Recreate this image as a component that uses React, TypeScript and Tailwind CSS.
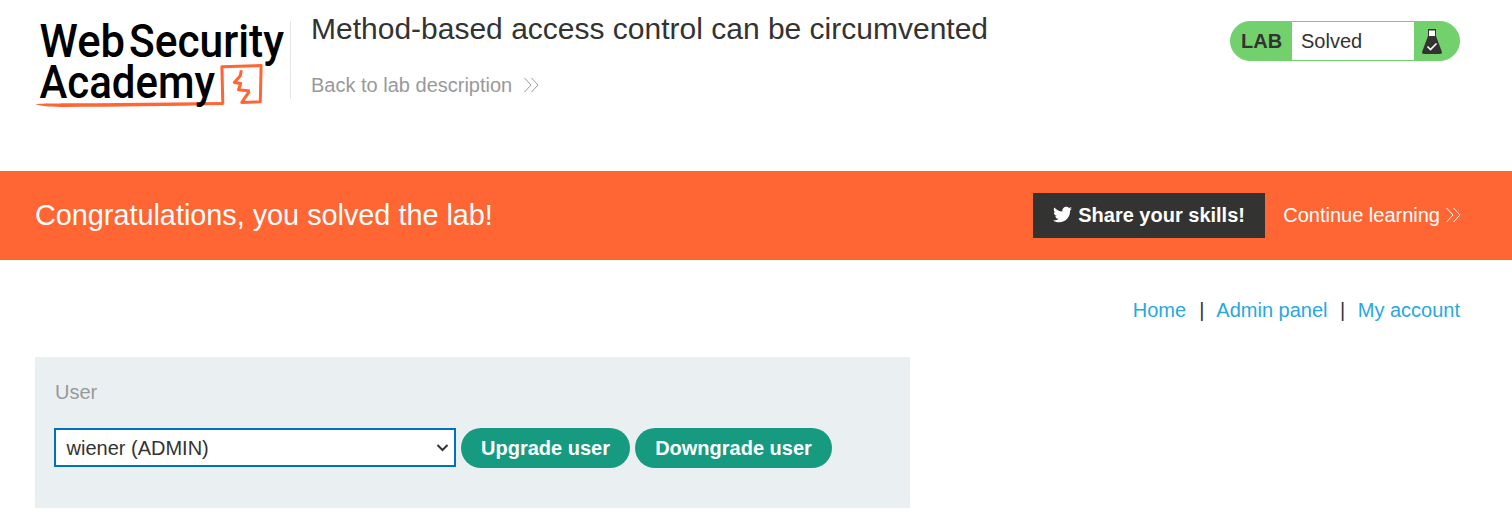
import { FaTwitter } from "react-icons/fa";

function Chevrons({ className }: { className: string }) {
  return (
    <svg width="16" height="16" viewBox="0 0 16 16" fill="none" stroke="currentColor" strokeWidth="1" className={className}>
      <path d="M1.500 1L8 8l-6.500 7M8.500 1L15 8l-6.500 7" />
    </svg>
  );
}

function Logo() {
  return (
    <svg width="255" height="96" viewBox="35 14 255 96" className="block shrink-0 overflow-visible">
      <path d="M35.500 104.300c12-1.200 30-.8 60-1l128-1.200v3c-50 .8-110 1.900-158 1.900-12 0-24-.5-30-2.700z" fill="#ff6633" />
      <g fill="none" stroke="#ff6633" strokeWidth="3" strokeLinejoin="round">
        <path d="M222.800 103.500l-.9-36.800 39.200-1.200-.8 36.300-18.500.6 7.500-11" />
        <path d="M241.300 70.200l-1 5.500-6 6.800 6.400 1-2.200 6.300 11.500 1.200" />
      </g>
      <g fill="#000" fontFamily="Roboto, sans-serif" fontWeight="500" fontSize="47">
        <text x="39.500" y="56.700" textLength="85.500" lengthAdjust="spacingAndGlyphs">Web</text>
        <text x="129" y="56.700" textLength="155" lengthAdjust="spacingAndGlyphs">Security</text>
        <text x="39.500" y="98" textLength="175.500" lengthAdjust="spacingAndGlyphs">Academy</text>
      </g>
    </svg>
  );
}

function Flask() {
  return (
    <svg width="22" height="28" viewBox="0 0 22 28">
      <path d="M7 1.500h8V8l5.800 15.500q.7 2.500-2 2.500H3.200q-2.700 0-2-2.500L7 8z" fill="#333332" />
      <path d="M8 2.500h6V8H8z" fill="#fff" />
      <path d="M7 1.500h8" stroke="#333332" />
      <path d="M6.500 18.500l3 3 6-6" fill="none" stroke="#fff" strokeWidth="1.600" />
    </svg>
  );
}

export default function App() {
  return (
    <div className="h-[513px] w-full overflow-hidden bg-white font-['Liberation_Sans',Arial,sans-serif] text-xl text-[#333332]">
      <header className="flex h-[171px] items-start pr-[52px] pl-[35px]">
        <div className="pt-3.5"><Logo /></div>
        <div className="mt-[21px] h-[78px] w-px bg-[#e6e6e6]" />
        <div className="ml-5 flex-1 pt-2.5">
          <h1 className="text-[30px] leading-[38px] whitespace-nowrap">Method-based access control can be circumvented</h1>
          <a className="mt-[23px] flex items-center leading-7 text-[#999]">
            Back to lab description
            <Chevrons className="ml-[11px]" />
          </a>
        </div>
        <div className="mt-[21px] flex h-10 w-[230px] overflow-hidden rounded-full border border-[#72d16d] bg-[#72d16d]">
          <strong className="flex w-[61px] items-center pl-2.5">LAB</strong>
          <span className="flex w-[122px] items-center bg-white pl-[9px]">Solved</span>
          <span className="pt-[6px] pl-[7px]"><Flask /></span>
        </div>
      </header>
      <section className="flex h-[89px] items-center bg-[#ff6633] pr-[51px] pl-[35px] text-white">
        <h2 className="flex-1 pb-0.5 text-[28.8px] leading-9">Congratulations, you solved the lab!</h2>
        <button className="flex h-[45px] w-[232px] items-center bg-[#333332] pb-0.5 pl-5 font-bold whitespace-nowrap">
          <FaTwitter size={19} className="mr-1.5 shrink-0" />
          Share your skills!
        </button>
        <a className="ml-[18px] flex items-center pb-0.5 whitespace-nowrap">
          Continue learning
          <Chevrons className="ml-[5px]" />
        </a>
      </section>
      <nav className="flex h-[97px] justify-end pt-9 pr-[52px] leading-7 text-[#29a7df]">
        <a>Home</a>
        <span className="mr-3 ml-[13px] text-[#333332]">|</span>
        <a>Admin panel</a>
        <span className="mr-[12.5px] ml-[12.5px] text-[#333332]">|</span>
        <a>My account</a>
      </nav>
      <form className="ml-[35px] h-[151px] w-[875px] bg-[#eaf0f2] pt-[21px] pl-[19px]">
        <label className="block pl-px leading-7 text-[#999]">User</label>
        <div className="mt-[22px] flex items-start gap-[5px]">
          <div className="flex h-[39px] w-[402px] items-center justify-between border-2 border-[#0071bc] bg-white pr-[5px] pl-[10.500px]">
            wiener (ADMIN)
            <svg width="13" height="9" viewBox="0 0 13 9" fill="none" stroke="#333332" strokeWidth="2"><path d="M1.500 2l5 5 5-5" /></svg>
          </div>
          <button type="button" className="h-10 w-[169px] rounded-full bg-[#169b80] font-bold whitespace-nowrap text-white">Upgrade user</button>
          <button type="button" className="h-10 w-[197px] rounded-full bg-[#169b80] font-bold whitespace-nowrap text-white">Downgrade user</button>
        </div>
      </form>
    </div>
  );
}
